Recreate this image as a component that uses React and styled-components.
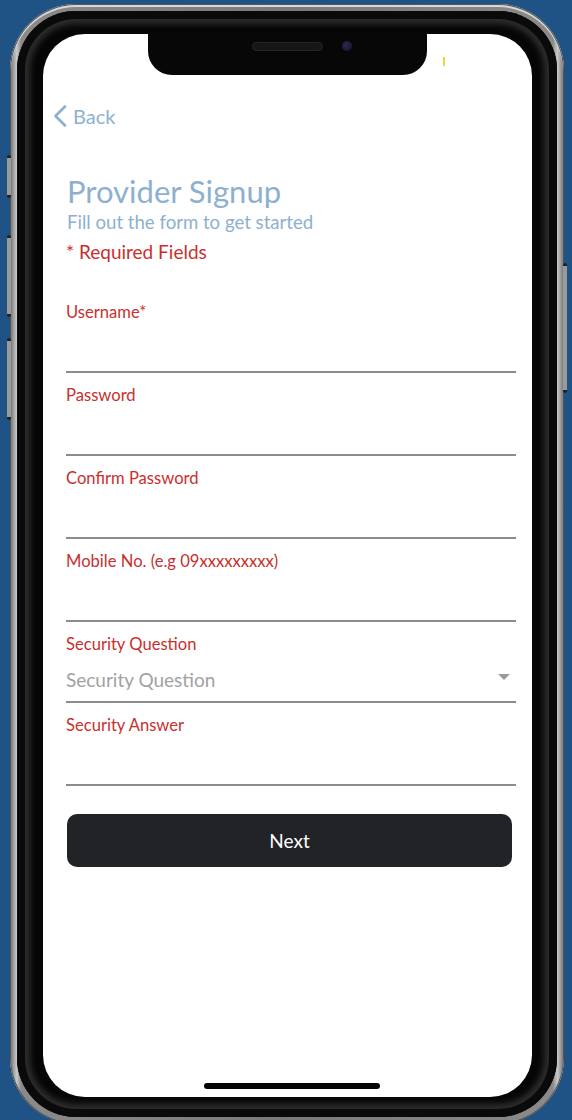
import styled, { createGlobalStyle } from 'styled-components'

const GlobalStyle = createGlobalStyle`
  html, body {
    margin: 0;
    padding: 0;
    background: #1f5386;
    overflow: hidden;
  }
  * { box-sizing: border-box; }
`

const fields = ['Username*', 'Password', 'Confirm Password', 'Mobile No. (e.g 09xxxxxxxxx)']

export default function App() {
  return (
    <>
      <GlobalStyle />
      <Page>
        <Phone>
          <SideButton side="left" top={151} height={43} />
          <SideButton side="left" top={231} height={82} />
          <SideButton side="left" top={334} height={82} />
          <SideButton side="right" top={259} height={130} />
          <Bezel>
            <Screen>
              <Notch>
                <Speaker />
                <Camera />
              </Notch>
              <StatusMark />

              <Header>
                <BackButton>
                  <svg width="14" height="22" viewBox="0 0 14 22">
                    <polyline points="12,1.5 2.5,11 12,20.5" fill="none" stroke="#8fb1d1" strokeWidth="2.6" strokeLinecap="round" strokeLinejoin="round" />
                  </svg>
                  <span>Back</span>
                </BackButton>
              </Header>

              <Form>
                <Title>Provider Signup</Title>
                <Subtitle>Fill out the form to get started</Subtitle>
                <Required>* Required Fields</Required>

                <Fields>
                  {fields.map((f) => (
                    <Field key={f}>
                      <Label>{f}</Label>
                      <Input />
                    </Field>
                  ))}
                  <Field>
                    <Label>Security Question</Label>
                    <Select>
                      <span>Security Question</span>
                      <Caret />
                    </Select>
                  </Field>
                  <Field>
                    <Label>Security Answer</Label>
                    <Input />
                  </Field>
                </Fields>

                <NextButton>Next</NextButton>
              </Form>

              <HomeIndicator />
            </Screen>
          </Bezel>
        </Phone>
      </Page>
    </>
  )
}

const Page = styled.div`
  width: 572px;
  height: 1120px;
  padding: 4px 0 0 10px;
  font-family: Lato, "Noto Sans", sans-serif;
`

const Phone = styled.div`
  position: relative;
  width: 554px;
  height: 1120px;
  padding: 7px;
  border-radius: 66px;
  background: linear-gradient(90deg, #6d6d6d 0%, #c9c9c9 1.2%, #8a8a8a 2%, #7a7a7a 50%, #8a8a8a 98%, #c9c9c9 98.8%, #6d6d6d 100%);
  box-shadow: inset 0 0 0 1px #555, inset 0 2px 0 1px #d8d8d8;
`

const SideButton = styled.div`
  position: absolute;
  ${(p) => (p.side === 'left' ? 'left: -3px;' : 'right: -3px;')}
  top: ${(p) => p.top}px;
  width: 4px;
  height: ${(p) => p.height}px;
  border-radius: 2px;
  background: linear-gradient(180deg, #222 0 3px, #9a9a9a 3px calc(100% - 3px), #222 calc(100% - 3px));
`

const Bezel = styled.div`
  height: 100%;
  padding: 23px 25px 20px 26px;
  border-radius: 59px;
  background: #060606;
  box-shadow: inset 0 0 0 8px #0a0a0a, inset 0 0 6px 13px #2e2e2e;
`

const Screen = styled.div`
  position: relative;
  height: 1063px;
  border-radius: 42px;
  background: #fff;
  overflow: hidden;
  display: flex;
  flex-direction: column;
`

const Notch = styled.div`
  position: absolute;
  top: 0;
  left: 105px;
  width: 279px;
  height: 41px;
  background: #070707;
  border-radius: 0 0 24px 24px;
`

const Speaker = styled.div`
  position: absolute;
  left: 104px;
  top: 8px;
  width: 71px;
  height: 9px;
  border-radius: 5px;
  background: #161616;
  border: 1px solid #262626;
`

const Camera = styled.div`
  position: absolute;
  left: 194px;
  top: 7px;
  width: 10px;
  height: 10px;
  border-radius: 50%;
  background: radial-gradient(circle at 40% 40%, #2a2850, #15142a);
`

const StatusMark = styled.div`
  position: absolute;
  left: 400px;
  top: 23px;
  width: 2px;
  height: 9px;
  background: #f1d33c;
`

const Header = styled.div`
  padding: 70px 0 0 10px;
`

const BackButton = styled.div`
  display: flex;
  align-items: center;
  gap: 6px;
  height: 24px;
  color: #8fb1d1;
  font-size: 20px;
  line-height: 24px;
`

const Form = styled.div`
  display: flex;
  flex-direction: column;
  padding: 46px 16px 0 23px;
`

const Title = styled.h1`
  margin: 0;
  font-size: 31px;
  line-height: 34px;
  font-weight: 400;
  color: #8db0d0;
  padding-left: 1px;
`

const Subtitle = styled.p`
  margin: 3px 0 0;
  font-size: 18.6px;
  line-height: 22px;
  color: #8db0d0;
  padding-left: 1px;
`

const Required = styled.p`
  margin: 7px 0 0;
  font-size: 19px;
  line-height: 24px;
  color: #c8302e;
`

const Fields = styled.div`
  display: flex;
  flex-direction: column;
  gap: 12px;
  margin-top: 38px;
`

const Field = styled.div`
  display: flex;
  flex-direction: column;
  border-bottom: 2px solid #8c8c8c;
`

const Label = styled.label`
  font-size: 16.6px;
  line-height: 20px;
  color: #c8302e;
`

const Input = styled.div`
  height: 49px;
`

const Select = styled.div`
  height: 47px;
  padding: 3px 6px 0 0;
  display: flex;
  align-items: center;
  justify-content: space-between;
  font-size: 19px;
  color: #a2a2a2;
`

const Caret = styled.span`
  width: 0;
  height: 0;
  margin-top: -5px;
  border-left: 6px solid transparent;
  border-right: 6px solid transparent;
  border-top: 6px solid #9a9a9a;
`

const NextButton = styled.button`
  margin: 28px 4px 0 1px;
  height: 53px;
  border: none;
  border-radius: 10px;
  background: #222327;
  color: #fff;
  font-family: Lato, "Noto Sans", sans-serif;
  font-size: 19px;
`

const HomeIndicator = styled.div`
  margin: auto 0 8px 161px;
  width: 176px;
  height: 6px;
  border-radius: 3px;
  background: #050505;
`
